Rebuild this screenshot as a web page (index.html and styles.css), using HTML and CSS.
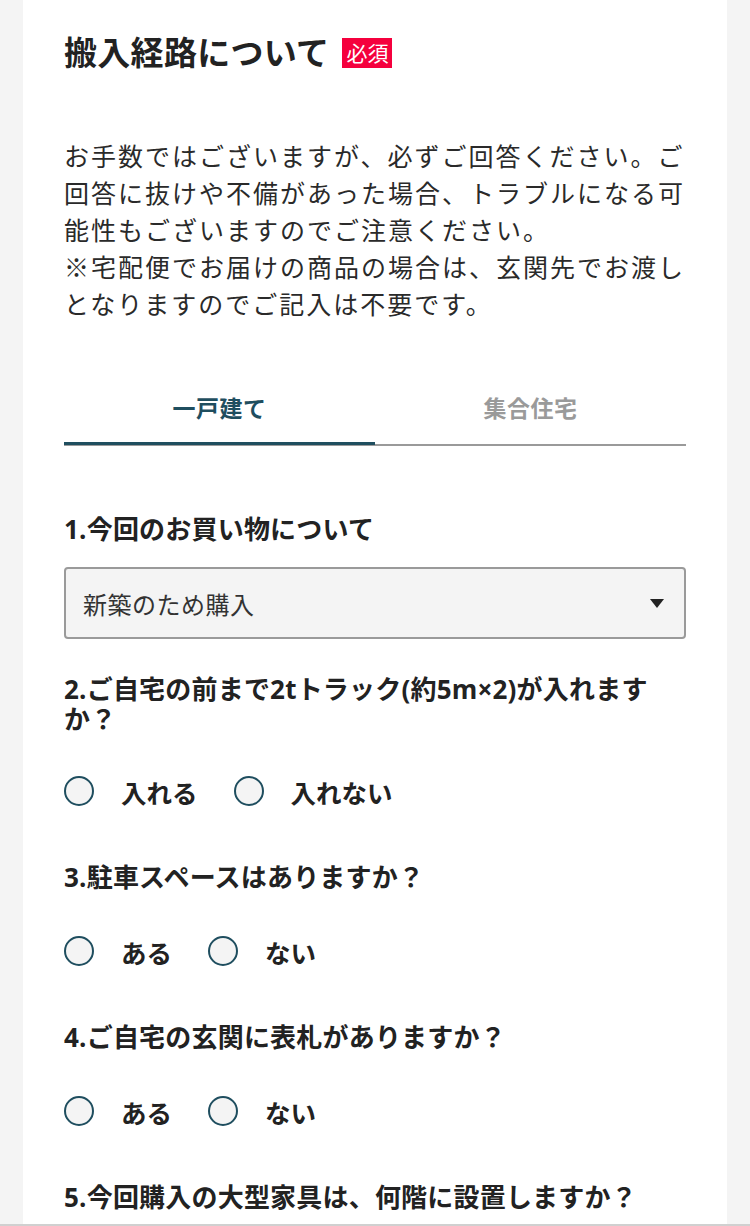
FILE: index.html
```html
<!DOCTYPE html>
<html lang="ja">
<head>
<meta charset="utf-8">
<title>搬入経路について</title>
<link rel="stylesheet" href="styles.css">
</head>
<body>
<main class="card">
  <h1 class="title">搬入経路について<span class="badge">必須</span></h1>
  <p class="lead">お手数ではございますが、必ずご回答ください。ご回答に抜けや不備があった場合、トラブルになる可能性もございますのでご注意ください。<br>※宅配便でお届けの商品の場合は、玄関先でお渡しとなりますのでご記入は不要です。</p>

  <div class="tabs">
    <div class="tab active">一戸建て</div>
    <div class="tab">集合住宅</div>
  </div>

  <section class="q first">
    <h2 class="q-label">1.今回のお買い物について</h2>
    <div class="select">
      <span class="select-text">新築のため購入</span>
      <span class="select-arrow"></span>
    </div>
  </section>

  <section class="q q2">
    <h2 class="q-label">2.ご自宅の前まで2tトラック(約5m×2)が入れますか？</h2>
    <div class="radios">
      <label class="radio"><span class="circle"></span>入れる</label>
      <label class="radio"><span class="circle"></span>入れない</label>
    </div>
  </section>

  <section class="q">
    <h2 class="q-label">3.駐車スペースはありますか？</h2>
    <div class="radios">
      <label class="radio"><span class="circle"></span>ある</label>
      <label class="radio"><span class="circle"></span>ない</label>
    </div>
  </section>

  <section class="q">
    <h2 class="q-label">4.ご自宅の玄関に表札がありますか？</h2>
    <div class="radios">
      <label class="radio"><span class="circle"></span>ある</label>
      <label class="radio"><span class="circle"></span>ない</label>
    </div>
  </section>

  <section class="q">
    <h2 class="q-label">5.今回購入の大型家具は、何階に設置しますか？</h2>
  </section>
</main>
<div class="footer-edge"></div>
</body>
</html>
```

FILE: styles.css
```css
html, body {
  margin: 0;
  padding: 0;
}
body {
  background: #f4f4f4;
  font-family: "Lato", "Noto Sans CJK JP", sans-serif;
  color: #222;
}
.card {
  margin: 0 23px;
  background: #fff;
  padding: 28px 41px 40px;
  min-height: 1300px;
  box-sizing: border-box;
}
.title {
  margin: 0;
  font-size: 33px;
  line-height: 48px;
  font-weight: 700;
  color: #222;
  display: flex;
  align-items: center;
  letter-spacing: 0.3px;
}
.badge {
  display: inline-block;
  margin-left: 13px;
  margin-top: 2px;
  background: #f5003d;
  color: #fff;
  font-size: 21px;
  font-weight: 400;
  line-height: 30px;
  width: 50px;
  text-align: center;
  letter-spacing: 0;
}
.lead {
  margin: 62px 0 0;
  font-size: 25px;
  line-height: 37px;
  letter-spacing: 2px;
  color: #2a2a2a;
}
.tabs {
  margin-top: 52px;
  display: flex;
  border-bottom: 2px solid #9a9a9a;
}
.tab {
  flex: 1;
  text-align: center;
  font-size: 23px;
  font-weight: 700;
  line-height: 33px;
  padding: 17px 0 17px;
  color: #9a9a9a;
  letter-spacing: 0.5px;
  border-bottom: 3px solid transparent;
  margin-bottom: -1px;
}
.tab.active {
  color: #1f4e5f;
  border-bottom-color: #1f4e5f;
}
.q {
  margin-top: 56px;
}
.q.first {
  margin-top: 68px;
}
.q.q2 {
  margin-top: 35px;
}
.q-label {
  margin: 0;
  font-family: "Open Sans", "Noto Sans CJK JP", sans-serif;
  font-size: 26px;
  line-height: 30px;
  font-weight: 700;
  letter-spacing: 0.2px;
  color: #222;
}
.select {
  margin-top: 23px;
  height: 72px;
  box-sizing: border-box;
  border: 2px solid #9a9a9a;
  border-radius: 4px;
  background: #f4f4f4;
  display: flex;
  align-items: center;
  padding: 0 20px 0 17px;
}
.select-text {
  flex: 1;
  font-size: 24px;
  color: #333;
  letter-spacing: 0.5px;
}
.select-arrow {
  width: 0;
  height: 0;
  border-left: 7px solid transparent;
  border-right: 7px solid transparent;
  border-top: 9px solid #222;
}
.radios {
  margin-top: 44px;
  display: flex;
  gap: 36px;
  height: 30px;
  align-items: center;
}
.q2 .radios {
  margin-top: 42px;
}
.radio {
  display: flex;
  align-items: center;
  gap: 27px;
  font-size: 25.5px;
  font-weight: 700;
  letter-spacing: 0;
  color: #222;
}
.circle {
  width: 30px;
  height: 30px;
  box-sizing: border-box;
  border: 2px solid #1f4e5f;
  border-radius: 50%;
  background: #f4f4f4;
  flex: none;
}
.footer-edge {
  position: fixed;
  left: 0;
  right: 0;
  bottom: 0;
  height: 2px;
  background: #d0d0d0;
}
```
